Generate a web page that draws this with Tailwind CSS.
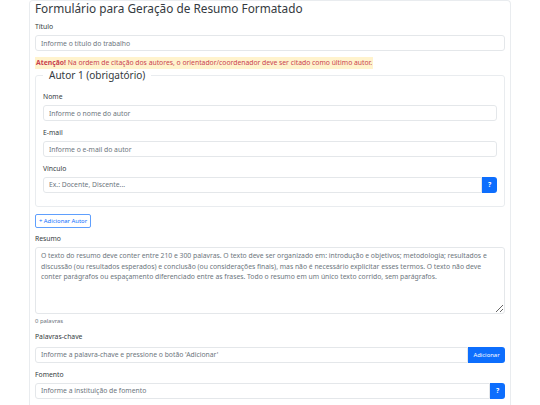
<!DOCTYPE html>
<html lang="pt-BR">
<head>
    <meta charset="UTF-8">
    <title>Formulário para Geração de Resumo Formatado</title>
    <script src="https://cdn.jsdelivr.net/npm/@tailwindcss/browser@4"></script>
</head>
<body class="bg-white h-[405px] overflow-hidden font-['Noto_Sans',sans-serif] text-[#343a40]">

    <div class="ml-[29px] w-[482px] h-[405px] border-x border-t border-[#e9ecef] rounded-t px-[5px] overflow-hidden">

        <h1 class="text-[11.8px] leading-[14px] text-[#343a40]">Formulário para Geração de Resumo Formatado</h1>

        <label class="block mt-[7px] mb-[3px] text-[6.8px] leading-[10px]">Título</label>
        <input type="text" placeholder="Informe o título do trabalho" class="block w-full h-[16px] px-[5px] text-[6.8px] border border-[#e4e7ea] rounded-[3px] placeholder:text-[#6c757d]">

        <div class="flex mt-[6px]">
            <span class="bg-[#fff3cd] text-[#c9414f] text-[6.8px] leading-[12px] px-[1px]"><b>Atenção!</b> Na ordem de citação dos autores, o orientador/coordenador deve ser citado como último autor.</span>
        </div>

        <!-- autor -->
        <fieldset class="border border-[#e9ecef] rounded-[3px] px-[7px] pb-[13px]">
            <legend class="text-[10px] leading-[13px] px-[6px] text-[#343a40]">Autor 1 (obrigatório)</legend>

            <label class="block mt-[10px] mb-[3px] text-[6.8px] leading-[10px]">Nome</label>
            <input type="text" placeholder="Informe o nome do autor" class="block w-full h-[16px] px-[5px] text-[6.8px] border border-[#e4e7ea] rounded-[3px] placeholder:text-[#6c757d]">

            <label class="block mt-[7px] mb-[3px] text-[6.8px] leading-[10px]">E-mail</label>
            <input type="text" placeholder="Informe o e-mail do autor" class="block w-full h-[16px] px-[5px] text-[6.8px] border border-[#e4e7ea] rounded-[3px] placeholder:text-[#6c757d]">

            <label class="block mt-[7px] mb-[3px] text-[6.8px] leading-[10px]">Vínculo</label>
            <div class="flex h-[16px]">
                <input type="text" placeholder="Ex.: Docente, Discente..." class="flex-1 min-w-0 px-[5px] text-[6.8px] border border-[#e4e7ea] rounded-l-[3px] placeholder:text-[#6c757d]">
                <button class="w-[15px] bg-[#0d6efd] text-white text-[6.8px] font-bold rounded-r-[3px]">?</button>
            </div>
        </fieldset>

        <button class="block mt-[7px] w-[56px] h-[14px] border border-[#5f9ffd] rounded-[2px] text-[#0d6efd] text-[5.9px] leading-[10px] whitespace-nowrap">+ Adicionar Autor</button>

        <label class="block mt-[6px] mb-[3px] text-[6.8px] leading-[10px]">Resumo</label>
        <textarea class="block w-full h-[67px] px-[5px] py-[3px] text-[6.8px] leading-[10.5px] border border-[#e4e7ea] rounded-[3px] placeholder:text-[#6c757d]" placeholder="O texto do resumo deve conter entre 210 e 300 palavras. O texto deve ser organizado em: introdução e objetivos; metodologia; resultados e discussão (ou resultados esperados) e conclusão (ou considerações finais), mas não é necessário explicitar esses termos. O texto não deve conter parágrafos ou espaçamento diferenciado entre as frases. Todo o resumo em um único texto corrido, sem parágrafos."></textarea>
        <p class="mt-[2px] text-[5.9px] leading-[10px] text-[#6c757d]">0 palavras</p>

        <label class="block mt-[6px] mb-[5px] text-[6.8px] leading-[10px]">Palavras-chave</label>
        <div class="flex h-[16px]">
            <input type="text" placeholder="Informe a palavra-chave e pressione o botão 'Adicionar'" class="flex-1 min-w-0 px-[5px] text-[6.8px] border border-[#e4e7ea] rounded-l-[3px] placeholder:text-[#6c757d]">
            <button class="w-[37px] bg-[#0d6efd] text-white text-[5.9px] rounded-r-[3px]">Adicionar</button>
        </div>

        <label class="block mt-[7px] mb-[3px] text-[6.8px] leading-[10px]">Fomento</label>
        <div class="flex h-[16px]">
            <input type="text" placeholder="Informe a instituição de fomento" class="flex-1 min-w-0 px-[5px] text-[6.8px] border border-[#e4e7ea] rounded-l-[3px] placeholder:text-[#6c757d]">
            <button class="w-[15px] bg-[#0d6efd] text-white text-[6.8px] font-bold rounded-r-[3px]">?</button>
        </div>
    </div>

</body>
</html>
